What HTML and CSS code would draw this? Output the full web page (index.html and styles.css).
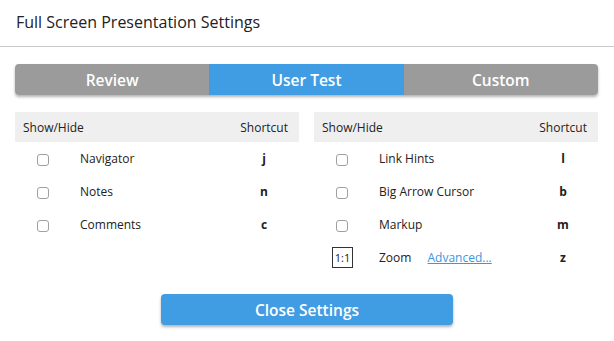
FILE: index.html
```html
<!DOCTYPE html>
<html lang="en">
<head>
  <meta charset="UTF-8">
  <title>Full Screen Presentation Settings</title>
  <link rel="stylesheet" href="styles.css">
</head>
<body>

  <div class="dialog">
    <h2 class="dialog-title">Full Screen Presentation Settings</h2>

    <div class="tabs">
      <button class="tab">Review</button>
      <button class="tab active">User Test</button>
      <button class="tab">Custom</button>
    </div>

    <div class="tables">
      <table>
        <thead>
          <tr>
            <th colspan="2">Show/Hide</th>
            <th class="key-head">Shortcut</th>
          </tr>
        </thead>
        <tbody>
          <tr>
            <td class="check"><input type="checkbox"></td>
            <td>Navigator</td>
            <td class="key">j</td>
          </tr>
          <tr>
            <td class="check"><input type="checkbox"></td>
            <td>Notes</td>
            <td class="key">n</td>
          </tr>
          <tr>
            <td class="check"><input type="checkbox"></td>
            <td>Comments</td>
            <td class="key">c</td>
          </tr>
        </tbody>
      </table>

      <table>
        <thead>
          <tr>
            <th colspan="2">Show/Hide</th>
            <th class="key-head">Shortcut</th>
          </tr>
        </thead>
        <tbody>
          <tr>
            <td class="check"><input type="checkbox"></td>
            <td>Link Hints</td>
            <td class="key">l</td>
          </tr>
          <tr>
            <td class="check"><input type="checkbox"></td>
            <td>Big Arrow Cursor</td>
            <td class="key">b</td>
          </tr>
          <tr>
            <td class="check"><input type="checkbox"></td>
            <td>Markup</td>
            <td class="key">m</td>
          </tr>
          <tr>
            <td class="check"><span class="ratio">1:1</span></td>
            <td>Zoom <a href="#" class="advanced">Advanced...</a></td>
            <td class="key">z</td>
          </tr>
        </tbody>
      </table>
    </div>

    <div class="footer">
      <button class="close-btn">Close Settings</button>
    </div>
  </div>

</body>
</html>
```

FILE: styles.css
```css
body {
  margin: 0;
  font-family: 'Open Sans', sans-serif;
  background: #fff;
  color: #222;
}

.dialog {
  width: 614px;
  height: 341px;
}

.dialog-title {
  margin: 0;
  height: 46px;
  line-height: 44px;
  padding-left: 16px;
  font-size: 16px;
  font-weight: 400;
  color: #222;
  border-bottom: 1px solid #c8c8c8;
}

.tabs {
  display: flex;
  margin: 17px 16px 0 15px;
  height: 31px;
  border-radius: 4px;
  overflow: hidden;
  box-shadow: 0 2px 3px rgba(0, 0, 0, 0.3);
}

.tab {
  flex: 1;
  border: none;
  padding: 0;
  font-family: inherit;
  font-size: 15.5px;
  font-weight: 600;
  color: #fff;
  background: #9b9b9b;
}

.tab.active {
  background: #419de3;
}

.tables {
  display: grid;
  grid-template-columns: 284px 284px;
  gap: 15px;
  margin: 17px 0 0 15px;
}

table {
  border-collapse: collapse;
  width: 100%;
  font-size: 12px;
  align-self: start;
}

th {
  height: 30px;
  padding: 0 0 0 8px;
  background: #efefef;
  font-weight: 400;
  text-align: left;
}

th.key-head {
  text-align: right;
  padding: 0 11px 0 0;
}

td {
  height: 33px;
  padding: 0;
}

td.check {
  width: 65px;
  padding-left: 8px;
  box-sizing: border-box;
}

td.check input {
  appearance: none;
  margin: 0 0 0 14px;
  width: 12px;
  height: 12px;
  border: 1px solid #a0a0a0;
  border-radius: 3px;
  background: #fff;
  vertical-align: middle;
}

td.key {
  width: 70px;
  text-align: center;
  font-weight: 700;
}

.ratio {
  display: inline-block;
  margin-left: 10px;
  width: 19px;
  height: 19px;
  line-height: 19px;
  border: 1px solid #333;
  text-align: center;
  font-size: 11px;
  vertical-align: middle;
}

.advanced {
  margin-left: 13px;
  color: #3a97e0;
}

.footer {
  display: flex;
  justify-content: center;
  margin-top: 20px;
}

.close-btn {
  width: 292px;
  height: 31px;
  border: none;
  border-radius: 4px;
  background: #419de3;
  color: #fff;
  font-family: inherit;
  font-size: 15.5px;
  font-weight: 600;
  box-shadow: 0 2px 3px rgba(0, 0, 0, 0.3);
}
```
